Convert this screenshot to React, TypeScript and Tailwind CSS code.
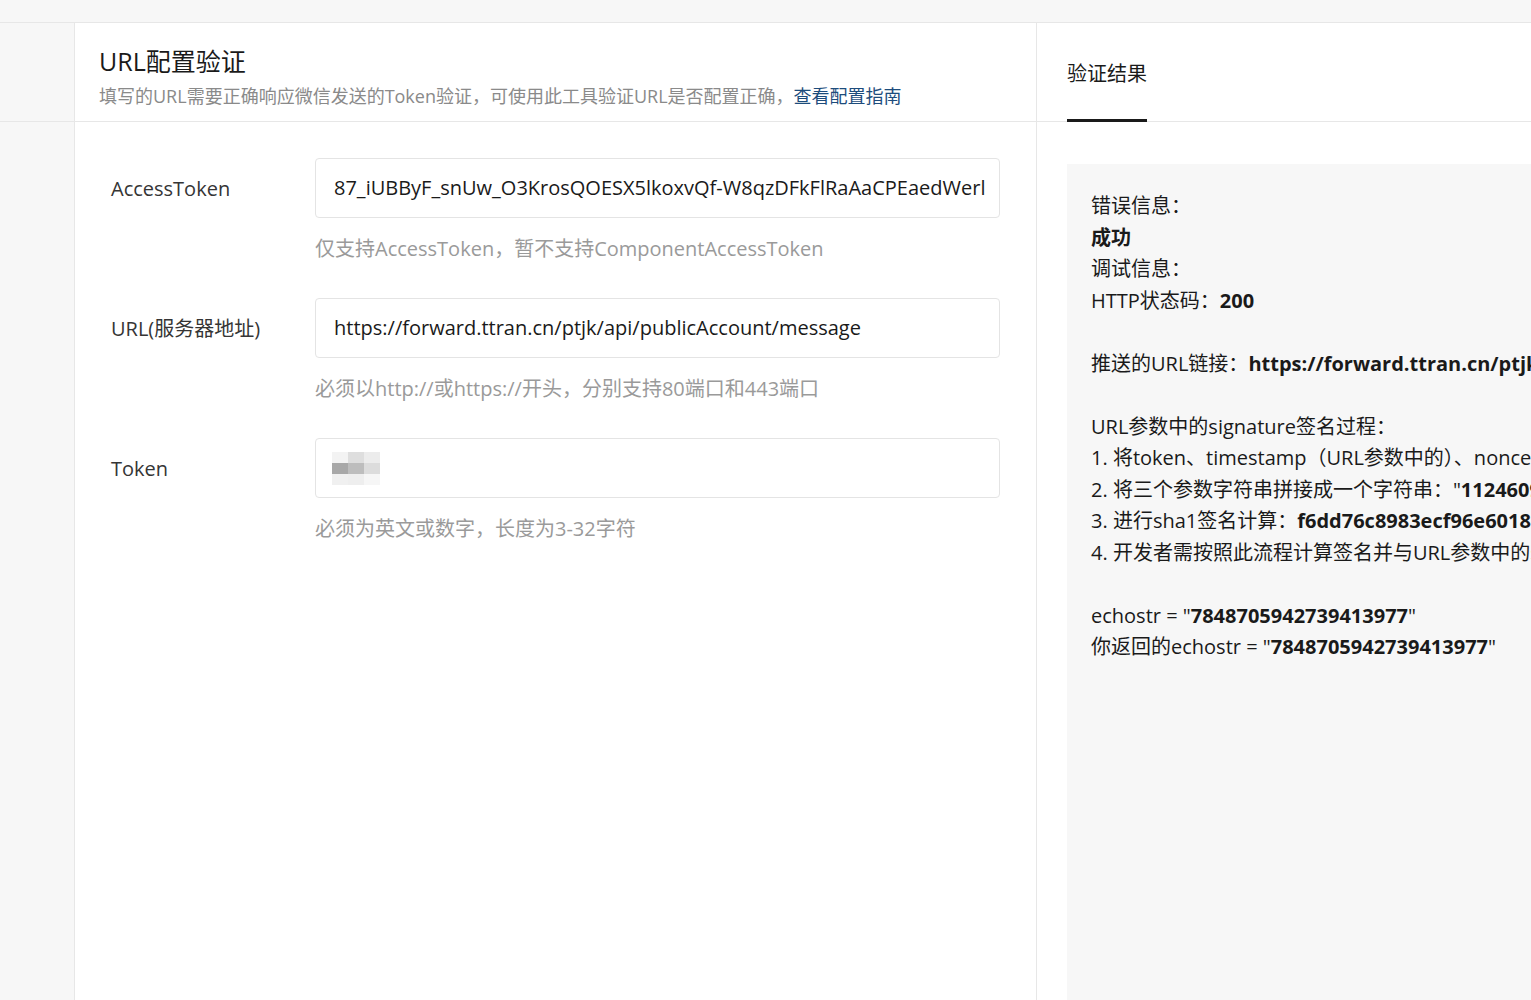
export default function App() {
  const f = { fontFamily: '"Open Sans","Noto Sans CJK SC",sans-serif' };
  const row = (label: string, value: string, hint: string, blur?: boolean) => (
    <div className="flex mb-[20px]">
      <div className="w-[204px] shrink-0 pt-[16px] text-[20px] text-[#353535]">{label}</div>
      <div className="flex-1 min-w-0">
        <div className="h-[60px] border border-[#e4e4e4] rounded-[4px] px-[18px] flex items-center text-[20px] text-[#1a1a1a] overflow-hidden whitespace-nowrap">
          {blur ? (
            <div className="flex flex-col -ml-[2px]">
              <div className="flex"><div className="w-[16px] h-[11px] bg-[#f3f3f3]" /><div className="w-[16px] h-[11px] bg-[#dedede]" /><div className="w-[16px] h-[11px] bg-[#ececec]" /></div>
              <div className="flex"><div className="w-[16px] h-[11px] bg-[#a8a8a8]" /><div className="w-[16px] h-[11px] bg-[#bdbdbd]" /><div className="w-[16px] h-[11px] bg-[#dcdcdc]" /></div>
              <div className="flex"><div className="w-[16px] h-[11px] bg-[#f0f0f0]" /><div className="w-[16px] h-[11px] bg-[#eeeeee]" /><div className="w-[16px] h-[11px] bg-[#f6f6f6]" /></div>
            </div>
          ) : value}
        </div>
        <div className="mt-[16px] text-[20px] text-[#9a9a9a] h-[44px]">{hint}</div>
      </div>
    </div>
  );
  return (
    <div style={f} className="w-[1531px] h-[1000px] overflow-hidden bg-[#f7f7f7] flex flex-col">
      <div className="h-[23px] border-b border-[#e7e7e7] shrink-0" />
      <div className="flex flex-1 min-h-0">
        <div className="w-[75px] border-r border-[#e7e7e7] flex flex-col"><div className="h-[99px] border-b border-[#e7e7e7]" /></div>
        <div className="w-[962px] bg-white border-r border-[#e7e7e7]">
          <div className="h-[99px] border-b border-[#e7e7e7] pl-[24px] pt-[22px]">
            <div className="text-[25px] leading-[32px] text-[#1a1a1a]">URL配置验证</div>
            <div className="text-[18px] leading-[26px] text-[#8a8a8a] mt-[6px] whitespace-nowrap">填写的URL需要正确响应微信发送的Token验证，可使用此工具验证URL是否配置正确，<span className="text-[#1d4c7c]">查看配置指南</span></div>
          </div>
          <div className="pl-[36px] pr-[36px] pt-[36px]">
            {row("AccessToken", "87_iUBByF_snUw_O3KrosQOESX5lkoxvQf-W8qzDFkFlRaAaCPEaedWerl", "仅支持AccessToken，暂不支持ComponentAccessToken")}
            {row("URL(服务器地址)", "https://forward.ttran.cn/ptjk/api/publicAccount/message", "必须以http://或https://开头，分别支持80端口和443端口")}
            {row("Token", "", "必须为英文或数字，长度为3-32字符", true)}
          </div>
        </div>
        <div className="flex-1 bg-white flex flex-col min-w-0">
          <div className="h-[99px] border-b border-[#e7e7e7] pl-[30px] flex items-end shrink-0">
            <div className="text-[20px] text-[#1a1a1a] border-b-[3px] border-[#1a1a1a] pb-[30px] -mb-[1px]">验证结果</div>
          </div>
          <div className="flex-1 pl-[30px] pt-[42px]">
            <div className="bg-[#f7f7f7] h-full pl-[24px] pt-[26px] text-[20px] leading-[31.5px] text-[#1a1a1a] whitespace-nowrap overflow-hidden">
              <div>错误信息：</div>
              <div className="font-bold">成功</div>
              <div>调试信息：</div>
              <div>HTTP状态码：<b>200</b></div>
              <div className="h-[31.5px]" />
              <div>推送的URL链接：<b>https://forward.ttran.cn/ptjk/api/publicAccount/message</b></div>
              <div className="h-[31.5px]" />
              <div>URL参数中的signature签名过程：</div>
              <div>1. 将token、timestamp（URL参数中的）、nonce（URL参数中的）</div>
              <div>2. 将三个参数字符串拼接成一个字符串："<b>1124609874</b>"</div>
              <div>3. 进行sha1签名计算：<b>f6dd76c8983ecf96e6018a</b></div>
              <div>4. 开发者需按照此流程计算签名并与URL参数中的signature</div>
              <div className="h-[31.5px]" />
              <div>echostr = "<b>7848705942739413977</b>"</div>
              <div>你返回的echostr = "<b>7848705942739413977</b>"</div>
            </div>
          </div>
        </div>
      </div>
    </div>
  );
}
